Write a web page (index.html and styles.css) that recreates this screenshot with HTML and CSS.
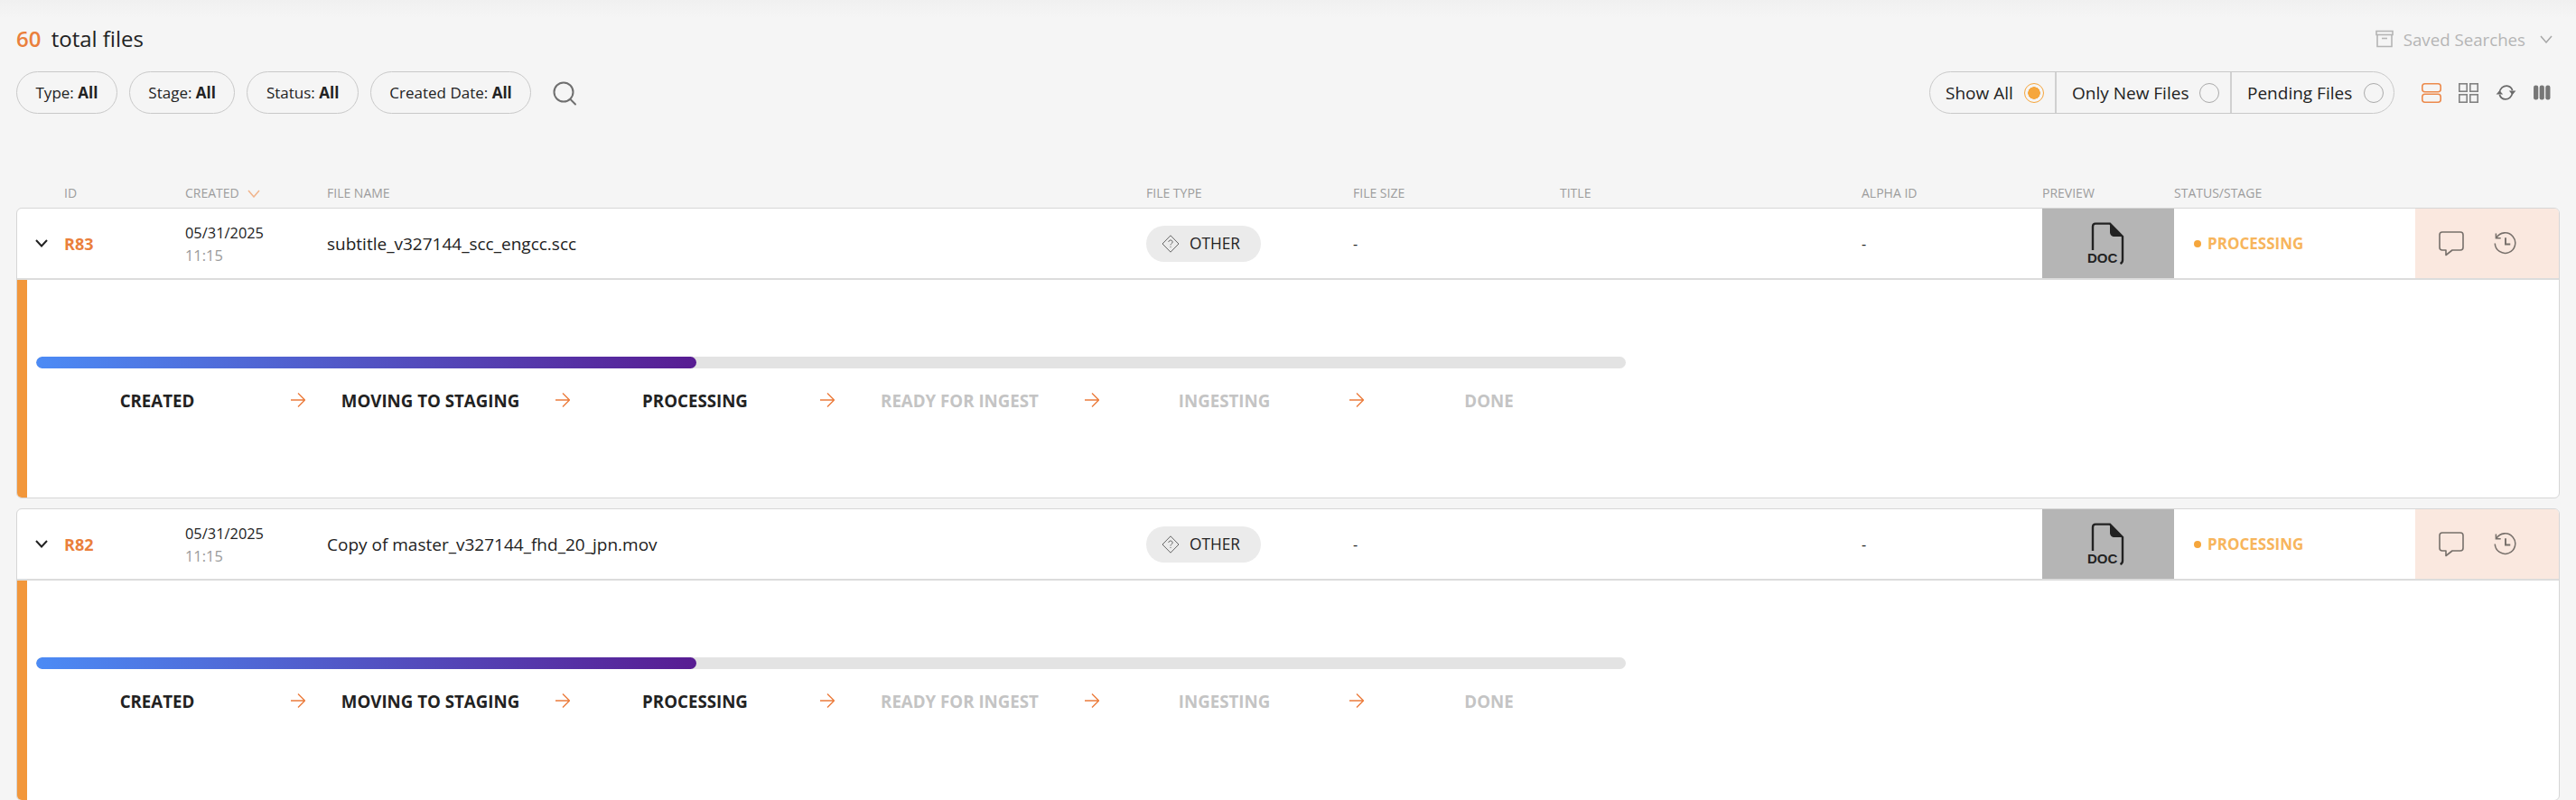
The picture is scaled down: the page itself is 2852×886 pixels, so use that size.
FILE: index.html
```html
<!DOCTYPE html>
<html lang="en">
  <head>
    <meta charset="UTF-8" />
    <title>Files</title>
    <link rel="stylesheet" href="styles.css">
  </head>
  <body>
    <div class="top-row">
      <div class="total"><span class="total-num">60</span> total files</div>
      <div class="saved">
        <svg class="saved-icon" width="20" height="20" viewBox="0 0 20 20" fill="none" stroke="#b5b5b5" stroke-width="1.6">
          <rect x="1" y="1.5" width="18" height="4" />
          <path d="M2 5.5V18.5H18V5.5" />
          <path d="M7 9.5H13" />
        </svg>
        <span>Saved Searches</span>
        <svg class="saved-chev" width="14" height="9" viewBox="0 0 14 9" fill="none" stroke="#a8a8a8" stroke-width="1.5"><path d="M1 1L7 8L13 1" /></svg>
      </div>
    </div>

    <div class="filter-row">
      <div class="filters">
        <div class="pill">Type: <b>All</b></div>
        <div class="pill">Stage: <b>All</b></div>
        <div class="pill">Status: <b>All</b></div>
        <div class="pill">Created Date: <b>All</b></div>
        <svg class="search-icon" width="28" height="28" viewBox="0 0 28 28" fill="none" stroke="#6f6f6f" stroke-width="2">
          <circle cx="13" cy="13" r="10.5" />
          <path d="M20.5 21L26 26.5" stroke-linecap="round" />
        </svg>
      </div>
      <div class="controls">
        <div class="toggle-group">
          <div class="toggle toggle-all">Show All <span class="radio radio-on"></span></div>
          <div class="toggle toggle-new">Only New Files <span class="radio"></span></div>
          <div class="toggle toggle-pending">Pending Files <span class="radio"></span></div>
        </div>
        <div class="view-icons">
          <svg width="22" height="22" viewBox="0 0 22 22" fill="none" stroke="#ec8a4c" stroke-width="1.6">
            <rect x="0.8" y="0.8" width="20.4" height="9" rx="3" />
            <rect x="0.8" y="12.2" width="20.4" height="9" rx="3" />
          </svg>
          <svg width="22" height="22" viewBox="0 0 22 22" fill="none" stroke="#828282" stroke-width="1.6">
            <rect x="0.8" y="0.8" width="8.4" height="8.4" />
            <rect x="12.8" y="0.8" width="8.4" height="8.4" />
            <rect x="0.8" y="12.8" width="8.4" height="8.4" />
            <rect x="12.8" y="12.8" width="8.4" height="8.4" />
          </svg>
          <svg width="23" height="19" viewBox="0 0 24 20" fill="none" stroke="#6a6a6a" stroke-width="1.8">
            <path d="M4.5 10C5 5 9 2 13 2.200C16 2.400 18.500 4.500 19.500 7.500" />
            <path d="M19.500 10C19 15 15 18 11 17.800C8 17.600 5.500 15.500 4.500 12.500" />
            <path d="M15.500 8H23.500L19.500 12.500Z" fill="#6a6a6a" stroke="none" />
            <path d="M0.500 12H8.500L4.500 7.500Z" fill="#6a6a6a" stroke="none" />
          </svg>
          <svg width="19" height="17" viewBox="0 0 20 18" fill="#777">
            <rect x="0" y="0.500" width="5.500" height="17" rx="2.500" />
            <rect x="7" y="0.500" width="5.500" height="17" rx="2.500" />
            <rect x="14" y="0.500" width="5.500" height="17" rx="2.500" />
          </svg>
        </div>
      </div>
    </div>

    <div class="table-head cols">
      <div></div>
      <div>ID</div>
      <div class="head-sort">CREATED
        <svg width="14" height="9" viewBox="0 0 14 9" fill="none" stroke="#f1b48c" stroke-width="1.500"><path d="M1 1L7 8L13 1" /></svg>
      </div>
      <div>FILE NAME</div>
      <div>FILE TYPE</div>
      <div>FILE SIZE</div>
      <div>TITLE</div>
      <div>ALPHA ID</div>
      <div>PREVIEW</div>
      <div>STATUS/STAGE</div>
      <div></div>
    </div>

    <div class="card">
      <div class="card-row cols">
        <div class="cell-chev">
          <svg width="14" height="9" viewBox="0 0 14 9" fill="none" stroke="#222" stroke-width="2"><path d="M1 1L7 7.500L13 1" /></svg>
        </div>
        <div class="file-id">R83</div>
        <div class="created">05/31/2025<span class="time">11:15</span></div>
        <div class="file-name">subtitle_v327144_scc_engcc.scc</div>
        <div>
          <span class="type-pill">
            <svg width="20" height="20" viewBox="0 0 20 20" fill="none" stroke="#666" stroke-width="1"><path d="M10 0.800L19 10L10 19.200L1 10Z" /><path d="M7.800 8C7.800 6.800 8.800 6 10 6C11.200 6 12.200 6.800 12.200 8C12.200 9.500 10 9.800 10 11.500M10 13V14" /></svg>
            OTHER
          </span>
        </div>
        <div class="dash">-</div>
        <div></div>
        <div class="dash">-</div>
        <div class="preview">
          <svg width="44" height="48" viewBox="0 0 44 48" fill="none" stroke="#222" stroke-width="2.400">
            <path d="M8 31V5C8 2.800 9 1.600 11 1.600H27L41 16V42C41 44 40.500 45 38.500 46" />
            <path d="M27 1.600L41 16H32C29 16 27 14 27 11Z" fill="#222" stroke="none" />
            <text class="doc-text" x="2" y="45" fill="#222" stroke="none">DOC</text>
          </svg>
        </div>
        <div class="status"><span class="status-dot"></span>PROCESSING</div>
        <div class="actions">
          <svg width="28" height="28" viewBox="0 0 28 28" fill="none" stroke="#77706b" stroke-width="1.600" stroke-linejoin="round">
            <path d="M4 1H24C26 1 27 2 27 4V18C27 20 26 21 24 21H15L8 26.500V21H4C2 21 1 20 1 18V4C1 2 2 1 4 1Z" />
          </svg>
          <svg width="25" height="25" viewBox="0 0 26 26" fill="none" stroke="#77706b" stroke-width="1.600">
            <path d="M3 6.500A11.700 11.700 0 1 1 1.300 13" />
            <path d="M2.500 1.500V7H8" />
            <path d="M13.500 6.500V14H19" stroke-width="2" />
          </svg>
        </div>
      </div>
      <div class="card-body">
        <div class="progress"><div class="progress-fill" style="width: 731px"></div></div>
        <div class="steps">
          <div class="step done">CREATED</div>
          <svg class="arrow" width="16" height="16" viewBox="0 0 16 16" fill="none" stroke="#ec7c3c" stroke-width="1.400"><path d="M0 8H15M8 0.500L15.500 8L8 15.500" /></svg>
          <div class="step done">MOVING TO STAGING</div>
          <svg class="arrow" width="16" height="16" viewBox="0 0 16 16" fill="none" stroke="#ec7c3c" stroke-width="1.400"><path d="M0 8H15M8 0.500L15.500 8L8 15.500" /></svg>
          <div class="step done">PROCESSING</div>
          <svg class="arrow" width="16" height="16" viewBox="0 0 16 16" fill="none" stroke="#ec7c3c" stroke-width="1.400"><path d="M0 8H15M8 0.500L15.500 8L8 15.500" /></svg>
          <div class="step">READY FOR INGEST</div>
          <svg class="arrow" width="16" height="16" viewBox="0 0 16 16" fill="none" stroke="#ec7c3c" stroke-width="1.400"><path d="M0 8H15M8 0.500L15.500 8L8 15.500" /></svg>
          <div class="step">INGESTING</div>
          <svg class="arrow" width="16" height="16" viewBox="0 0 16 16" fill="none" stroke="#ec7c3c" stroke-width="1.400"><path d="M0 8H15M8 0.500L15.500 8L8 15.500" /></svg>
          <div class="step">DONE</div>
        </div>
      </div>
    </div>

    <div class="card">
      <div class="card-row cols">
        <div class="cell-chev">
          <svg width="14" height="9" viewBox="0 0 14 9" fill="none" stroke="#222" stroke-width="2"><path d="M1 1L7 7.500L13 1" /></svg>
        </div>
        <div class="file-id">R82</div>
        <div class="created">05/31/2025<span class="time">11:15</span></div>
        <div class="file-name">Copy of master_v327144_fhd_20_jpn.mov</div>
        <div>
          <span class="type-pill">
            <svg width="20" height="20" viewBox="0 0 20 20" fill="none" stroke="#666" stroke-width="1"><path d="M10 0.800L19 10L10 19.200L1 10Z" /><path d="M7.800 8C7.800 6.800 8.800 6 10 6C11.200 6 12.200 6.800 12.200 8C12.200 9.500 10 9.800 10 11.500M10 13V14" /></svg>
            OTHER
          </span>
        </div>
        <div class="dash">-</div>
        <div></div>
        <div class="dash">-</div>
        <div class="preview">
          <svg width="44" height="48" viewBox="0 0 44 48" fill="none" stroke="#222" stroke-width="2.400">
            <path d="M8 31V5C8 2.800 9 1.600 11 1.600H27L41 16V42C41 44 40.500 45 38.500 46" />
            <path d="M27 1.600L41 16H32C29 16 27 14 27 11Z" fill="#222" stroke="none" />
            <text class="doc-text" x="2" y="45" fill="#222" stroke="none">DOC</text>
          </svg>
        </div>
        <div class="status"><span class="status-dot"></span>PROCESSING</div>
        <div class="actions">
          <svg width="28" height="28" viewBox="0 0 28 28" fill="none" stroke="#77706b" stroke-width="1.600" stroke-linejoin="round">
            <path d="M4 1H24C26 1 27 2 27 4V18C27 20 26 21 24 21H15L8 26.500V21H4C2 21 1 20 1 18V4C1 2 2 1 4 1Z" />
          </svg>
          <svg width="25" height="25" viewBox="0 0 26 26" fill="none" stroke="#77706b" stroke-width="1.600">
            <path d="M3 6.500A11.700 11.700 0 1 1 1.300 13" />
            <path d="M2.500 1.500V7H8" />
            <path d="M13.500 6.500V14H19" stroke-width="2" />
          </svg>
        </div>
      </div>
      <div class="card-body">
        <div class="progress"><div class="progress-fill" style="width: 731px"></div></div>
        <div class="steps">
          <div class="step done">CREATED</div>
          <svg class="arrow" width="16" height="16" viewBox="0 0 16 16" fill="none" stroke="#ec7c3c" stroke-width="1.400"><path d="M0 8H15M8 0.500L15.500 8L8 15.500" /></svg>
          <div class="step done">MOVING TO STAGING</div>
          <svg class="arrow" width="16" height="16" viewBox="0 0 16 16" fill="none" stroke="#ec7c3c" stroke-width="1.400"><path d="M0 8H15M8 0.500L15.500 8L8 15.500" /></svg>
          <div class="step done">PROCESSING</div>
          <svg class="arrow" width="16" height="16" viewBox="0 0 16 16" fill="none" stroke="#ec7c3c" stroke-width="1.400"><path d="M0 8H15M8 0.500L15.500 8L8 15.500" /></svg>
          <div class="step">READY FOR INGEST</div>
          <svg class="arrow" width="16" height="16" viewBox="0 0 16 16" fill="none" stroke="#ec7c3c" stroke-width="1.400"><path d="M0 8H15M8 0.500L15.500 8L8 15.500" /></svg>
          <div class="step">INGESTING</div>
          <svg class="arrow" width="16" height="16" viewBox="0 0 16 16" fill="none" stroke="#ec7c3c" stroke-width="1.400"><path d="M0 8H15M8 0.500L15.500 8L8 15.500" /></svg>
          <div class="step">DONE</div>
        </div>
      </div>
    </div>
  </body>
</html>
```

FILE: styles.css
```css
* {
  margin: 0;
  padding: 0;
  box-sizing: border-box;
}

body {
  font-family: "Open Sans", "Liberation Sans", sans-serif;
  background: linear-gradient(#f0f0f0, #f5f5f5 20px);
  color: #222;
  padding: 0 18px;
  height: 886px;
  overflow: hidden;
}

.top-row {
  display: flex;
  justify-content: space-between;
  align-items: center;
  height: 66px;
  padding-top: 20px;
}

.total {
  font-size: 24px;
  line-height: 46px;
}

.total-num {
  color: #ea7f3c;
  font-weight: 600;
  margin-right: 5px;
}

.saved {
  display: flex;
  align-items: center;
  color: #b5b5b5;
  font-size: 18.700px;
  margin-right: 8px;
}

.saved-icon {
  margin-right: 11px;
}

.saved-chev {
  margin-left: 16px;
}

.filter-row {
  display: flex;
  justify-content: space-between;
  align-items: center;
  margin-top: 13px;
  height: 47px;
}

.filters {
  display: flex;
  align-items: center;
  gap: 13px;
}

.pill {
  height: 47px;
  line-height: 45px;
  padding: 0 20.500px;
  border: 1px solid #c9c9c9;
  border-radius: 24px;
  font-size: 17px;
  white-space: pre-wrap;
}

.search-icon {
  margin-left: 10px;
}

.controls {
  display: flex;
  align-items: center;
  gap: 30px;
}

.toggle-group {
  display: flex;
  height: 47px;
  border: 1px solid #c9c9c9;
  border-radius: 24px;
}

.toggle {
  display: flex;
  align-items: center;
  justify-content: space-between;
  font-size: 19px;
  padding: 0 12px 0 17px;
  border-right: 2px solid #d0d0d0;
}

.toggle-all {
  width: 140px;
}

.toggle-new {
  width: 194px;
}

.toggle-pending {
  width: 179px;
  padding-right: 11px;
  border-right: none;
}

.radio {
  width: 22px;
  height: 22px;
  border: 1.500px solid #aaa;
  border-radius: 50%;
}

.radio-on {
  border-color: #f5a63c;
  background: radial-gradient(circle, #f5a63c 0 6.500px, transparent 7px);
}

.view-icons {
  display: flex;
  align-items: center;
  gap: 19px;
  margin-right: 10px;
}

.cols {
  display: grid;
  grid-template-columns: 53px 134px 157px 907px 229px 229px 334px 200px 146px 267px 160px;
  align-items: center;
}

.table-head {
  margin-top: 74px;
  height: 30px;
  padding-bottom: 4px;
  color: #9c9c9c;
  font-size: 14px;
}

.head-sort svg {
  margin-left: 6px;
}

.card {
  display: flex;
  flex-direction: column;
  height: 322px;
  margin-bottom: 11px;
  background: white;
  border: 1px solid #d6d6d6;
  border-radius: 6px;
  overflow: hidden;
}

.card:last-child {
  height: 324px;
  margin-bottom: 0;
}

.card-row {
  height: 79px;
  flex: none;
  border-bottom: 2px solid #dcdcdc;
  align-items: stretch;
  margin-left: -1px;
}

.card-row > div {
  display: flex;
  align-items: center;
}

.cell-chev {
  padding-left: 21px;
}

.file-id {
  color: #ea7f3c;
  font-size: 18px;
  font-weight: 700;
}

.card-row .created {
  display: block;
  padding-top: 14px;
  font-size: 16.400px;
  line-height: 25px;
}

.time {
  display: block;
  color: #9a9a9a;
}

.file-name {
  font-size: 19px;
}

.type-pill {
  display: inline-flex;
  align-items: center;
  gap: 11px;
  height: 40px;
  width: 127px;
  padding-left: 17px;
  background: #ebebeb;
  border-radius: 20px;
  font-size: 17.300px;
}

.dash {
  font-size: 16px;
}

.preview {
  background: #b5b5b5;
  justify-content: center;
  padding-right: 6px;
}

.doc-text {
  font-family: "Liberation Sans", sans-serif;
  font-size: 15px;
  font-weight: bold;
}

.status {
  color: #f7b55c;
  font-size: 17px;
  font-weight: 700;
  padding-left: 22px;
}

.status-dot {
  width: 8px;
  height: 8px;
  margin-right: 7px;
  border-radius: 50%;
  background: #f5a63c;
}

.actions {
  background: #fae8df;
  padding-left: 26px;
  gap: 33px;
}

.card-body {
  flex: 1;
  padding: 85px 0 0 10px;
  border-left: 11px solid #f2973b;
}

.progress {
  width: 1760px;
  height: 13px;
  background: #e3e3e3;
  border-radius: 7px;
  overflow: hidden;
}

.progress-fill {
  height: 100%;
  border-radius: 7px;
  background: linear-gradient(90deg, #4c8bf5, #581c92);
}

.steps {
  display: flex;
  align-items: center;
  width: 1760px;
  margin-top: 23px;
  height: 24px;
}

.step {
  flex: 0 0 277px;
  text-align: center;
  font-size: 18.700px;
  font-weight: 700;
  color: #c4c4c4;
  white-space: nowrap;
}

.step.done {
  color: #222;
}

.step:first-child {
  flex-basis: 268px;
  margin-right: 14px;
}

.arrow {
  flex: none;
}
```
